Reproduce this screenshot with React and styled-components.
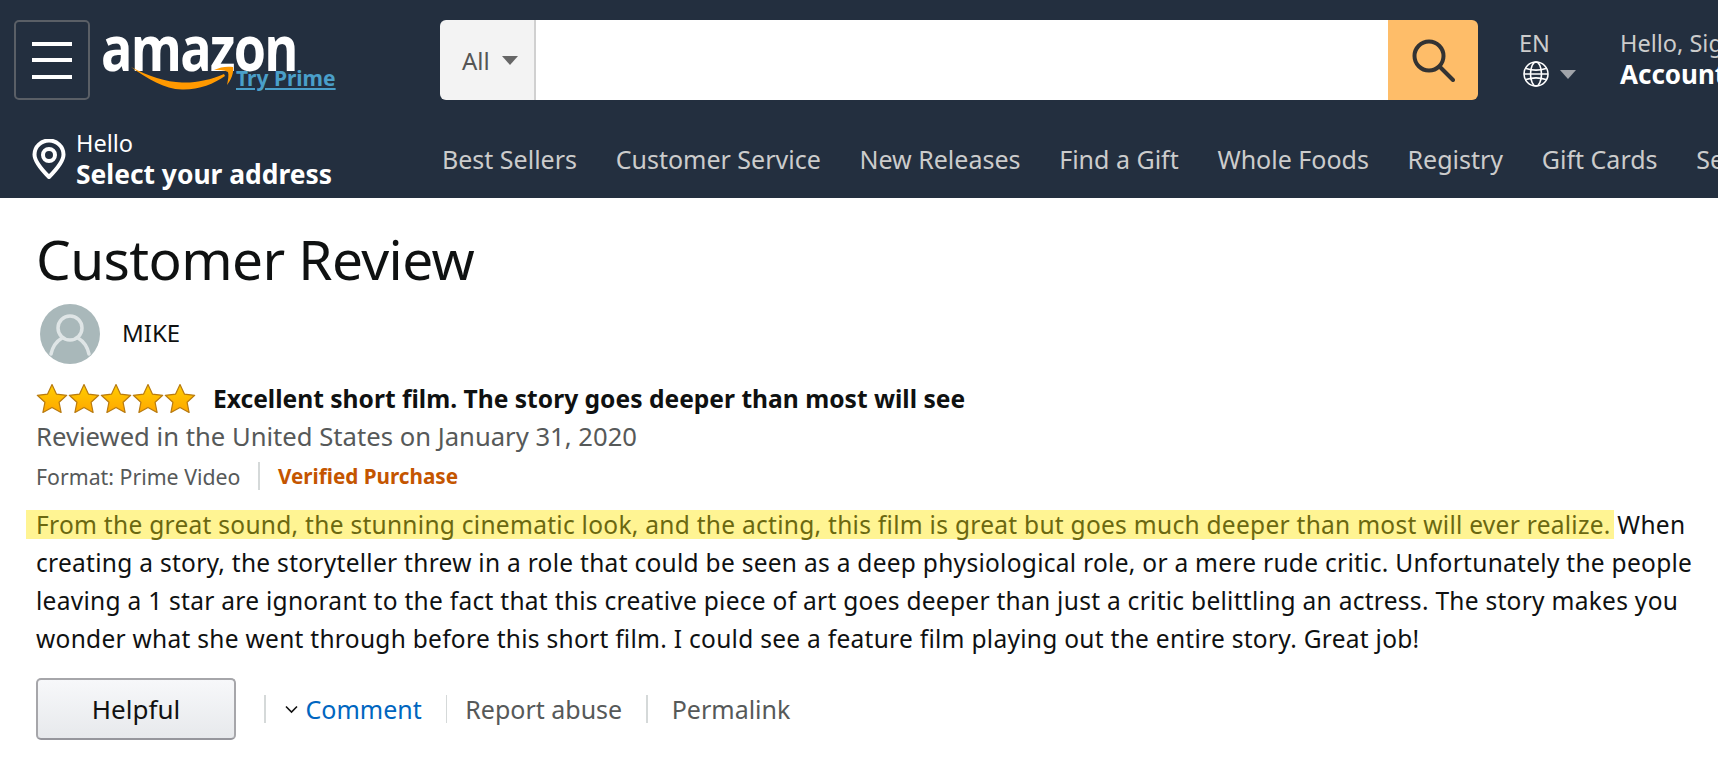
import React from "react";
import styled, { createGlobalStyle } from "styled-components";

const Global = createGlobalStyle`
  html, body { margin: 0; padding: 0; background: #fff; overflow: hidden; }
  body { font-family: "Noto Sans", "Liberation Sans", sans-serif; width: 1718px; height: 766px; }
`;
const Page = styled.div`width: 1718px; height: 766px; overflow: hidden;`;
const Header = styled.header`
  background: #232f3f; height: 198px; overflow: hidden; box-sizing: border-box; padding: 20px 0 0 14px;
`;
const TopRow = styled.div`display: flex; align-items: flex-start; height: 80px; width: 1800px;`;
const Burger = styled.button`
  width: 76px; height: 80px; box-sizing: border-box; background: transparent; border: 2px solid #5a5f66; border-radius: 5px;
  display: flex; flex-direction: column; justify-content: center; align-items: center; gap: 12.5px; padding: 0; flex: none;
`;
const BurgerLine = styled.span`width: 40px; height: 4px; background: #fff; display: block;`;
const Logo = styled.div`position: relative; width: 350px; height: 80px; flex: none;`;
const LogoWord = styled.span`
  position: absolute; left: 11px; top: -12px; font: 700 62px/78px "Open Sans", sans-serif; color: #fff;
  letter-spacing: -2px; transform-origin: left top; transform: scaleX(0.84);
`;
const Smile = styled.svg`position: absolute; left: 40px; top: 45px;`;
const TryPrime = styled.a`
  position: absolute; left: 146px; top: 44px; font: 700 21px/28px "Noto Sans", sans-serif; color: #4a9fc9; text-decoration: underline; white-space: nowrap;
`;
const Search = styled.div`
  display: flex; width: 1038px; height: 80px; border-radius: 6px; overflow: hidden; flex: none;
`;
const SearchScope = styled.div`
  width: 96px; box-sizing: border-box; background: #f3f3f3; border-right: 2px solid #d0d0d0;
  display: flex; align-items: center; gap: 12px; padding-left: 22px; color: #555; font-size: 24px;
`;
const Caret = styled.span`
  width: 0; height: 0; border-left: 8px solid transparent; border-right: 8px solid transparent;
  border-top: 9px solid ${p => p.$color}; display: block;
`;
const SearchInput = styled.div`flex: 1; background: #fff;`;
const SearchButton = styled.div`
  width: 90px; background: #febd69; display: flex; align-items: center; justify-content: center;
`;
const Lang = styled.div`width: 101px; margin-left: 41px; flex: none; color: #ccc; font-size: 23.5px; line-height: 30px; padding-top: 8px;`;
const LangRow = styled.div`display: flex; align-items: center; gap: 11px; margin: 3px 0 0 4px;`;
const Account = styled.div`flex: none; padding-top: 8px; color: #ccc; font-size: 23.5px; line-height: 30px; white-space: nowrap;`;
const AccountStrong = styled.div`color: #fff; font-weight: 700; font-size: 26px; line-height: 32px;`;
const BottomRow = styled.div`display: flex; align-items: center; height: 78px; padding-top: 20px; margin-left: -14px; width: 1800px;`;
const Address = styled.div`display: flex; align-items: center; width: 442px; padding-left: 32px; box-sizing: border-box; flex: none; gap: 10px;`;
const AddressText = styled.div`color: #fff; font-size: 23.5px; line-height: 29px; white-space: nowrap; padding-top: 2px;`;
const AddressStrong = styled.div`font-weight: 700; font-size: 26.4px; line-height: 33px;`;
const Nav = styled.nav`display: flex; gap: 38.7px; color: #ccc; font-size: 25px; white-space: nowrap;`;
const Main = styled.main`padding: 0 0 0 36px; color: #0f1111;`;
const Title = styled.h1`font-weight: 400; font-size: 55px; line-height: 64px; margin: 29px 0 11px; letter-spacing: -0.6px;`;
const Profile = styled.div`display: flex; align-items: center; gap: 22px; margin-left: 4px; height: 60px;`;
const AvatarWrap = styled.div`width: 60px; height: 60px; margin-top: 4px; border-radius: 50%; overflow: hidden; background: #a9b8ba; flex: none;`;
const Name = styled.span`font-size: 24px; color: #0f1111;`;
const RatingRow = styled.div`display: flex; align-items: center; margin: 21px 0 0 0; height: 30px;`;
const Stars = styled.div`display: flex; gap: 0; width: 177px; flex: none;`;
const ReviewTitle = styled.span`font-weight: 700; font-size: 24.6px; white-space: nowrap;`;
const Meta = styled.div`font-size: 25.65px; line-height: 34px; color: #565959; margin-top: 7px;`;
const FormatRow = styled.div`display: flex; align-items: center; height: 30px; margin-top: 7px; font-size: 21.3px; color: #565959;`;
const Verified = styled.span`color: #c45500; font-weight: 700; font-size: 20.7px;`;
const VBar = styled.span`display: block; width: 1.5px; height: 28px; background: #d5d9d9; margin: ${p => p.$m}; flex: none;`;
const Body = styled.p`
  font-size: 24.5px; letter-spacing: 0.28px; line-height: 38px; margin: 15px 0 0 0; color: #0f1111; width: 1668px;
`;
const Mark = styled.mark`
  color: #6b6810; padding: 0 3px 0 10px; margin: 0 -3px 0 -10px;
  background: linear-gradient(transparent 2px, #fff493 2px, #fff493 calc(100% - 2px), transparent calc(100% - 2px));
`;
const Actions = styled.div`display: flex; align-items: center; margin: 20px 0 0 0; font-size: 25px; color: #565959;`;
const Helpful = styled.button`
  width: 200px; height: 62px; box-sizing: border-box; border: 2px solid #a6a6aa; border-bottom-color: #96969c; border-radius: 5px;
  background: linear-gradient(#f7f8fa, #e7e9ec); font: 400 26px "Noto Sans", sans-serif; color: #111; padding: 0;
`;
const CommentLink = styled.a`color: #0066c0; margin-left: 8px;`;
const PlainLink = styled.a`color: #565959;`;

const Star = () => (
  <svg width="32" height="30" viewBox="0 0 32 30">
    <defs>
      <linearGradient id="sg" x1="0" y1="0" x2="0" y2="1">
        <stop offset="0" stopColor="#ffce00" />
        <stop offset="1" stopColor="#ffa700" />
      </linearGradient>
    </defs>
    <path d="M16 1.5l4.4 9.6 10.3 1.2-7.6 7 2 10.2L16 24.4l-9.1 5.1 2-10.2-7.6-7 10.3-1.2z" fill="url(#sg)" stroke="#b87a10" strokeWidth="1.2" strokeLinejoin="round" />
  </svg>
);

const NAV = ["Best Sellers", "Customer Service", "New Releases", "Find a Gift", "Whole Foods", "Registry", "Gift Cards", "Sell"];

export default function App() {
  return (
    <Page>
      <Global />
      <Header>
        <TopRow>
          <Burger aria-label="Menu"><BurgerLine /><BurgerLine /><BurgerLine /></Burger>
          <Logo>
            <LogoWord>amazon</LogoWord>
            <Smile width="106" height="26" viewBox="0 0 106 26">
              <path d="M1 2C18 14 34 24 52 24.5 68 25 84 19 95 11L94 9C80 15 66 18 52 17.5 36 17 18 11 1 2z" fill="#ff9900" />
              <path d="M84 5C90 2 97 1 103 2 104 8 101 15 97 20 98 15 99 10 98 7 94 5 89 5 84 5z" fill="#ff9900" />
            </Smile>
            <TryPrime>Try Prime</TryPrime>
          </Logo>
          <Search>
            <SearchScope>All <Caret $color="#666" /></SearchScope>
            <SearchInput />
            <SearchButton>
              <svg width="44" height="44" viewBox="0 0 44 44" fill="none" stroke="#333" strokeWidth="4" strokeLinecap="round">
                <circle cx="18" cy="18" r="14.5" />
                <path d="M29 29l13 13" />
              </svg>
            </SearchButton>
          </Search>
          <Lang>
            EN
            <LangRow>
              <svg width="26" height="26" viewBox="0 0 26 26" fill="none" stroke="#fff" strokeWidth="1.6">
                <circle cx="13" cy="13" r="12" />
                <ellipse cx="13" cy="13" rx="5.5" ry="12" />
                <path d="M3 7.5c6 2 14 2 20 0M3 18.5c6-2 14-2 20 0M1 13h24" />
              </svg>
              <Caret $color="#a0a4aa" />
            </LangRow>
          </Lang>
          <Account>
            Hello, Sign in
            <AccountStrong>Account &amp; Lists</AccountStrong>
          </Account>
        </TopRow>
        <BottomRow>
          <Address>
            <svg width="34" height="40" viewBox="0 0 34 40" fill="none" stroke="#fff" strokeWidth="4">
              <path d="M17 38C8 29 2.5 22 2.5 15.5a14.5 14 0 0 1 29 0C31.5 22 26 29 17 38z" strokeLinejoin="round" />
              <circle cx="17" cy="16" r="6" />
            </svg>
            <AddressText>
              Hello
              <AddressStrong>Select your address</AddressStrong>
            </AddressText>
          </Address>
          <Nav>{NAV.map(n => <span key={n}>{n}</span>)}</Nav>
        </BottomRow>
      </Header>
      <Main>
        <Title>Customer Review</Title>
        <Profile>
          <AvatarWrap>
            <svg width="60" height="60" viewBox="0 0 60 60" fill="none" stroke="#dfe5e6" strokeWidth="3.5" strokeLinecap="round">
              <circle cx="30" cy="24" r="12" />
              <path d="M22 34c-5 3-9 7-11 16M38 34c5 3 9 7 11 16" />
            </svg>
          </AvatarWrap>
          <Name>MIKE</Name>
        </Profile>
        <RatingRow>
          <Stars><Star /><Star /><Star /><Star /><Star /></Stars>
          <ReviewTitle>Excellent short film. The story goes deeper than most will see</ReviewTitle>
        </RatingRow>
        <Meta>Reviewed in the United States on January 31, 2020</Meta>
        <FormatRow>
          Format: Prime Video
          <VBar $m="0 18px 0 18px" />
          <Verified>Verified Purchase</Verified>
        </FormatRow>
        <Body>
          <Mark>From the great sound, the stunning cinematic look, and the acting, this film is great but goes much deeper than most will ever realize.</Mark>{" "}
          When creating a story, the storyteller threw in a role that could be seen as a deep physiological role, or a mere rude critic. Unfortunately the people leaving a 1 star are ignorant to the fact that this creative piece of art goes deeper than just a critic belittling an actress. The story makes you wonder what she went through before this short film. I could see a feature film playing out the entire story. Great job!
        </Body>
        <Actions>
          <Helpful>Helpful</Helpful>
          <VBar $m="0 19px 0 28px" />
          <svg width="13" height="9" viewBox="0 0 13 9" fill="none" stroke="#111" strokeWidth="1.6"><path d="M1 1.5l5.5 5.5 5.5-5.5" /></svg>
          <CommentLink>Comment</CommentLink>
          <VBar $m="0 18px 0 24px" />
          <PlainLink>Report abuse</PlainLink>
          <VBar $m="0 24px 0 24px" />
          <PlainLink>Permalink</PlainLink>
        </Actions>
      </Main>
    </Page>
  );
}
